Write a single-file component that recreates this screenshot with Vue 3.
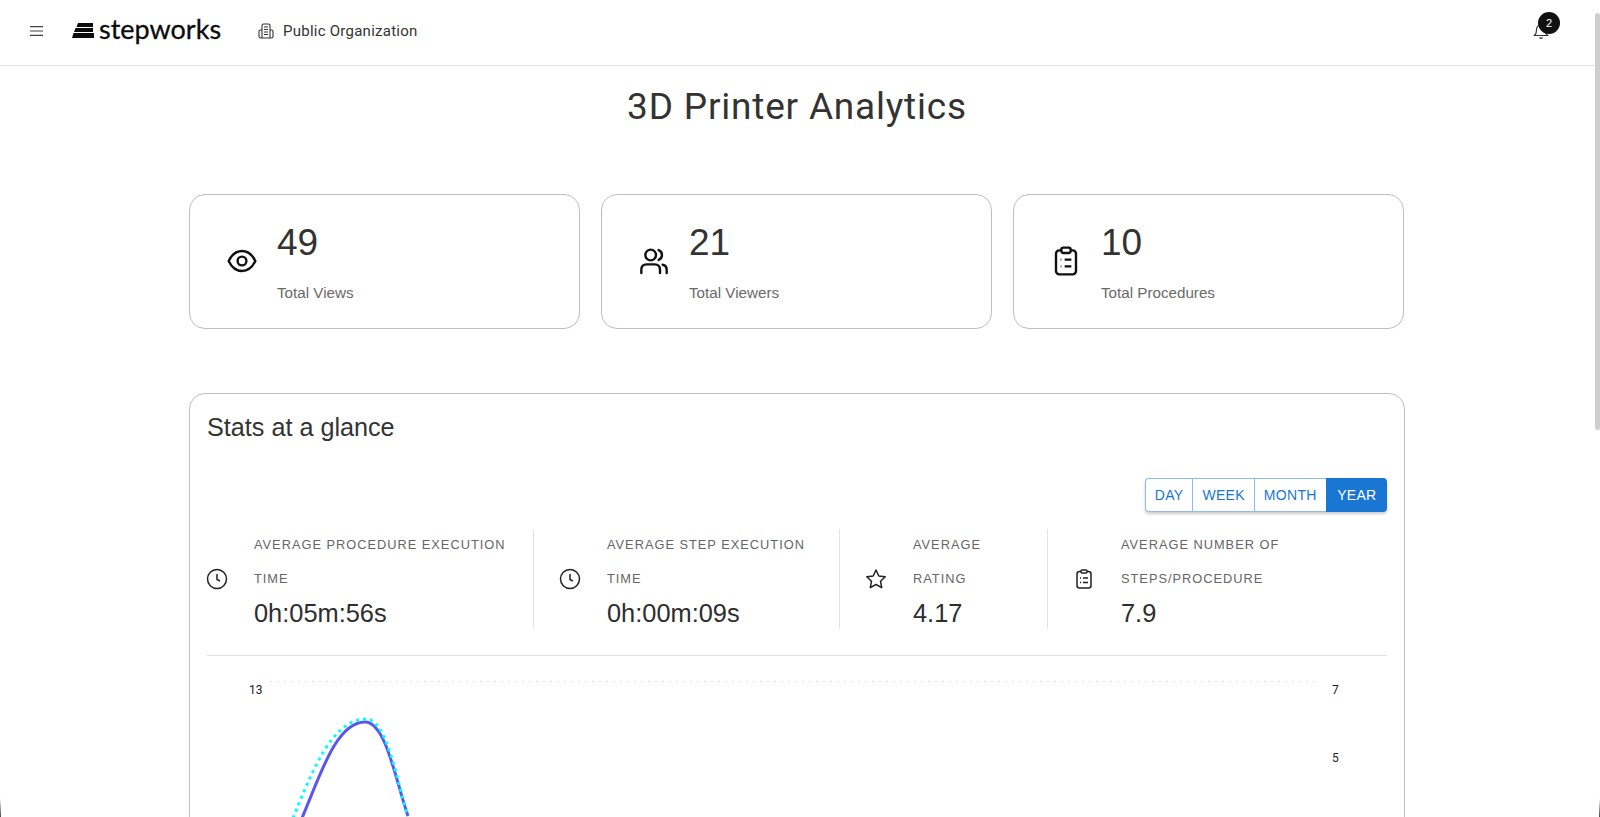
<template>
	<div class="page">
		<header class="topbar">
			<svg class="menu-icon" viewBox="0 0 13 10" width="13" height="10">
				<path d="M0 .7h13M0 5h13M0 9.300h13" stroke="#444" stroke-width="1.200" fill="none" />
			</svg>
			<div class="logo">
				<svg viewBox="0 0 22 15" width="22" height="15">
					<path d="M6 0h15v4H4.500zM3.500 5H21v4H2zM1.500 10H22v5H0z" fill="#0c0c0c" />
				</svg>
				<span class="logo-text">stepworks</span>
			</div>
			<svg class="org-icon" viewBox="0 0 16 16" width="16" height="16">
				<path d="M4 15V2.500Q4 1 5.500 1h5Q12 1 12 2.500V15M4 7H2.500Q1 7 1 8.500V13.500Q1 15 2.500 15H13.500Q15 15 15 13.500V8.500Q15 7 13.500 7H12M6 4h4M6 6.500h4M6 9h4M6 11.500h4" stroke="#333" stroke-width="1.100" fill="none" />
			</svg>
			<span class="org-name">Public Organization</span>
			<div class="bell">
				<svg viewBox="0 0 16 18" width="16" height="18">
					<path d="M1.500 13.500Q3.500 12 3.500 8Q3.500 3 8 3Q12.500 3 12.500 8Q12.500 12 14.500 13.500ZM6.500 15.500Q8 17.200 9.500 15.500" stroke="#333" stroke-width="1.200" fill="none" />
				</svg>
				<span class="badge">2</span>
			</div>
		</header>

		<main class="content">
			<h1 class="title">3D Printer Analytics</h1>

			<div class="cards">
				<div v-for="card in cards" :key="card.label" class="card">
					<svg class="card-icon" viewBox="0 0 24 24" width="32" height="32" v-html="icons[card.icon]"></svg>
					<div class="card-body">
						<div class="card-value">{{ card.value }}</div>
						<div class="card-label">{{ card.label }}</div>
					</div>
				</div>
			</div>

			<section class="stats">
				<h2 class="stats-title">Stats at a glance</h2>

				<div class="toggle-row">
					<div class="toggle">
						<button
							v-for="period in periods"
							:key="period"
							class="toggle-btn"
							:class="{ active: period === activePeriod }"
							@click="activePeriod = period"
						>
							{{ period }}
						</button>
					</div>
				</div>

				<div class="metrics">
					<div v-for="metric in metrics" :key="metric.value" class="metric" :class="metric.size">
						<svg class="metric-icon" viewBox="0 0 24 24" width="24" height="24" v-html="icons[metric.icon]"></svg>
						<div class="metric-body">
							<div class="metric-label">{{ metric.line1 }}</div>
							<div class="metric-label">{{ metric.line2 }}</div>
							<div class="metric-value">{{ metric.value }}</div>
						</div>
					</div>
				</div>

				<div class="chart">
					<div class="axis axis-left">13</div>
					<div class="plot">
						<svg class="plot-svg" viewBox="0 0 1050 140" width="1050" height="140">
							<path d="M0 .5H1050" stroke="#dcdcdc" stroke-dasharray="2 5" fill="none" />
							<path d="M32 137C50 95 66 41 95 41C116 41 126 101 138 135" stroke="#5b55f2" stroke-width="3" fill="none" />
							<path d="M23 137C42 91 62 38 96 38C117 38 127 101 138 135" stroke="#0ff" stroke-width="3" stroke-dasharray="3 4" fill="none" />
						</svg>
					</div>
					<div class="axis axis-right">
						<span>7</span>
						<span>5</span>
					</div>
				</div>
			</section>
		</main>

		<div class="scroll-thumb"></div>
		<div class="corner corner-left"></div>
		<div class="corner corner-right"></div>
	</div>
</template>

<script setup>
import { ref } from 'vue'

const icons = {
	eye: '<path d="M2 12C4.500 6.800 8 4.500 12 4.500S19.500 6.800 22 12C19.500 17.200 16 19.500 12 19.500S4.500 17.200 2 12Z" fill="none" stroke="#111" stroke-width="1.800"/><circle cx="12" cy="12" r="3.300" fill="none" stroke="#111" stroke-width="1.800"/>',
	users: '<circle cx="9.500" cy="7.500" r="4" fill="none" stroke="#111" stroke-width="1.800"/><path d="M2.500 21V18.500Q2.500 14.500 6.500 14.500H12.500Q16.500 14.500 16.500 18.500V21M15.500 3.800A4 4 0 0 1 15.500 11.200M18.500 14.800Q21.500 15.500 21.500 18.500V21" fill="none" stroke="#111" stroke-width="1.800" stroke-linecap="round"/>',
	clipboard: '<rect x="4.500" y="4" width="15" height="18" rx="2.500" fill="none" stroke="#111" stroke-width="1.800"/><rect x="8.500" y="2" width="7" height="4" rx="1.500" fill="#fff" stroke="#111" stroke-width="1.800"/><path d="M11 11h5M11 16h5M8 11h.5M8 16h.5" stroke="#111" stroke-width="1.800" fill="none"/>',
	clock: '<circle cx="12" cy="12" r="9.500" fill="none" stroke="#222" stroke-width="1.500"/><path d="M12 7v5.500l3 1.500" fill="none" stroke="#222" stroke-width="1.500"/>',
	star: '<path d="M12 3l2.800 6 6.400.8-4.700 4.400 1.200 6.500L12 17.500l-5.700 3.200 1.200-6.500L2.800 9.800l6.400-.8Z" fill="none" stroke="#222" stroke-width="1.500" stroke-linejoin="round"/>',
	list: '<rect x="5" y="4.500" width="14" height="16.500" rx="2.500" fill="none" stroke="#222" stroke-width="1.500"/><rect x="9" y="3" width="6" height="3" rx="1" fill="#fff" stroke="#222" stroke-width="1.500"/><path d="M11 11h5M11 15.500h5M8 11h1M8 15.500h1" stroke="#222" stroke-width="1.500" fill="none"/>',
}

const cards = [
	{ icon: 'eye', value: '49', label: 'Total Views' },
	{ icon: 'users', value: '21', label: 'Total Viewers' },
	{ icon: 'clipboard', value: '10', label: 'Total Procedures' },
]

const metrics = [
	{ icon: 'clock', line1: 'AVERAGE PROCEDURE EXECUTION', line2: 'TIME', value: '0h:05m:56s', size: 'm-1' },
	{ icon: 'clock', line1: 'AVERAGE STEP EXECUTION', line2: 'TIME', value: '0h:00m:09s', size: 'm-2' },
	{ icon: 'star', line1: 'AVERAGE', line2: 'RATING', value: '4.17', size: 'm-3' },
	{ icon: 'list', line1: 'AVERAGE NUMBER OF', line2: 'STEPS/PROCEDURE', value: '7.9', size: 'm-4' },
]

const periods = ['DAY', 'WEEK', 'MONTH', 'YEAR']
const activePeriod = ref('YEAR')
</script>

<style scoped>
.page {
	height: 817px;
	overflow: hidden;
	position: relative;
	background: #fff;
	font-family: "Liberation Sans", Arial, sans-serif;
	color: #2e2e2e;
}

.topbar {
	height: 66px;
	display: flex;
	align-items: center;
	padding-left: 30px;
	padding-bottom: 4px;
	border-bottom: 1px solid #e4e4e4;
	box-sizing: border-box;
}

.menu-icon {
	margin-right: 29px;
}

.logo {
	display: flex;
	align-items: center;
	width: 186px;
	color: #0c0c0c;
}

.logo-text {
	font-family: "Lato", sans-serif;
	font-size: 27px;
	line-height: 30px;
	margin-left: 5px;
	margin-top: -4px;
	-webkit-text-stroke: 0.3px #0c0c0c;
}

.org-icon {
	margin-right: 9px;
}

.org-name {
	font-family: "Roboto", sans-serif;
	font-size: 15px;
	letter-spacing: 0.25px;
	color: #333;
}

.bell {
	margin-left: auto;
	margin-right: 51px;
	position: relative;
	display: flex;
}

.badge {
	position: absolute;
	left: 5px;
	top: -10px;
	width: 22px;
	height: 22px;
	border-radius: 50%;
	background: #111;
	color: #fff;
	font-size: 11px;
	line-height: 22px;
	text-align: center;
}

.content {
	width: 1216px;
	margin-left: 189px;
}

.title {
	margin: 19px 0 0;
	text-align: center;
	font-family: "Roboto", sans-serif;
	font-weight: 400;
	font-size: 37px;
	line-height: 44px;
	letter-spacing: 0.8px;
	color: #333;
}

.cards {
	display: grid;
	grid-template-columns: repeat(3, 391px);
	gap: 21px;
	margin-top: 65px;
}

.card {
	height: 135px;
	box-sizing: border-box;
	border: 1px solid #bfbfbf;
	border-radius: 16px;
	display: flex;
	padding-left: 36px;
}

.card-icon {
	margin-top: 50px;
	margin-right: 19px;
}

.card-value {
	font-size: 37px;
	line-height: 40px;
	margin-top: 28px;
	color: #333;
}

.card-label {
	font-size: 15.200px;
	line-height: 20px;
	margin-top: 20px;
	color: #6a6a6a;
}

.stats {
	margin-top: 64px;
	height: 500px;
	box-sizing: border-box;
	border: 1px solid #bfbfbf;
	border-radius: 16px;
	padding: 0 17px;
}

.stats-title {
	margin: 19px 0 0;
	font-weight: 400;
	font-size: 25.200px;
	line-height: 28px;
	color: #333;
}

.toggle-row {
	display: flex;
	justify-content: flex-end;
	margin-top: 37px;
}

.toggle {
	display: flex;
	height: 34px;
	border-radius: 4px;
	box-shadow: 0 2px 3px rgba(0, 0, 0, 0.2);
}

.toggle-btn {
	font-family: "Liberation Sans", Arial, sans-serif;
	font-size: 14px;
	letter-spacing: 0.3px;
	padding: 0 9px;
	background: #fff;
	color: #1976d2;
	border: 1px solid #90bbe8;
	border-right: none;
}

.toggle-btn:first-child {
	border-radius: 4px 0 0 4px;
}

.toggle-btn.active {
	background: #1976d2;
	color: #fff;
	border-color: #1976d2;
	border-radius: 0 4px 4px 0;
	padding: 0 10.500px;
}

.metrics {
	display: flex;
	margin-top: 17px;
	height: 127px;
	box-sizing: border-box;
	padding-bottom: 26px;
	border-bottom: 1px solid #e2e2e2;
}

.metric {
	display: flex;
	align-items: center;
	border-right: 1px solid #e2e2e2;
	box-sizing: border-box;
}

.metric:last-child {
	border-right: none;
}

.m-1 {
	width: 327px;
}

.m-2 {
	width: 306px;
	padding-left: 24px;
}

.m-3 {
	width: 208px;
	padding-left: 24px;
}

.m-4 {
	flex: 1;
	padding-left: 24px;
}

.metric-icon {
	flex: none;
	margin-right: 25px;
}

.m-1 .metric-icon {
	margin-left: -2px;
}

.metric-label {
	font-size: 12.800px;
	line-height: 34px;
	letter-spacing: 1px;
	color: #666;
	white-space: nowrap;
}

.metric-value {
	font-size: 25.400px;
	line-height: 34px;
	color: #2e2e2e;
}

.chart {
	position: relative;
	display: flex;
	margin-top: 25px;
}

.axis {
	font-family: "Roboto", sans-serif;
	font-size: 12px;
	color: #222;
}

.axis-left {
	width: 63px;
	padding-left: 42px;
	box-sizing: border-box;
	margin-top: 2px;
	line-height: 14px;
}

.plot {
	width: 1050px;
	height: 140px;
}

.plot-svg {
	display: block;
}

.axis-right {
	margin-left: 12px;
	display: flex;
	flex-direction: column;
	gap: 54px;
	margin-top: 2px;
	line-height: 14px;
}

.scroll-thumb {
	position: absolute;
	right: 0;
	top: 13px;
	width: 5px;
	height: 417px;
	border-radius: 3px;
	background: #cfcfcf;
}

.corner {
	position: absolute;
	bottom: 0;
	width: 1px;
	height: 18px;
	background: linear-gradient(to bottom, transparent, #444);
}

.corner-left {
	left: 0;
}

.corner-right {
	right: 0;
}
</style>
